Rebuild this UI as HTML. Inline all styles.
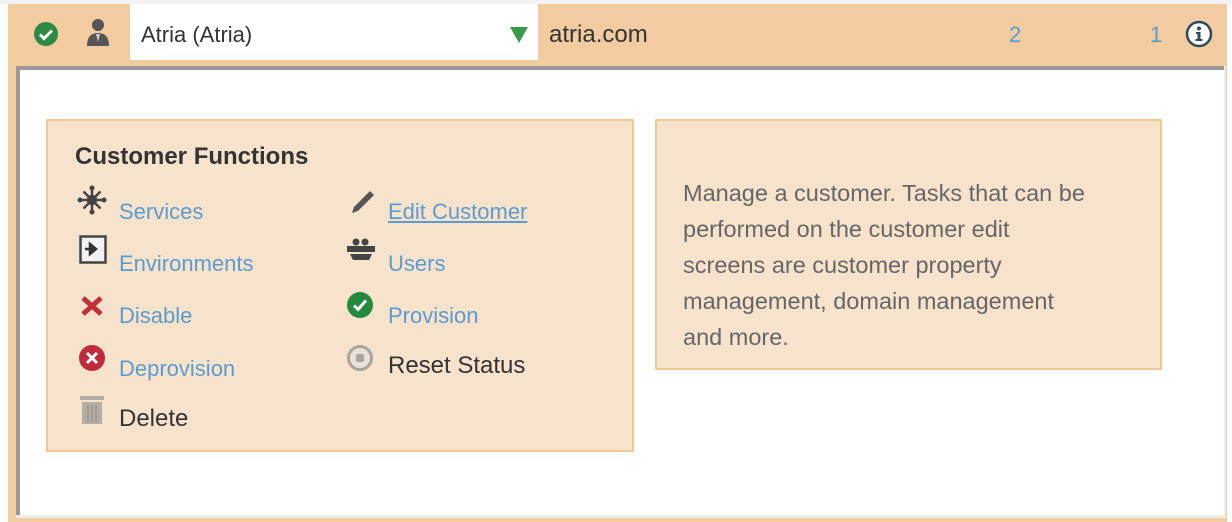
<!DOCTYPE html>
<html><head><meta charset="utf-8"><style>
*{margin:0;padding:0;box-sizing:border-box}
body{width:1232px;height:522px;position:relative;background:#fff;overflow:hidden;font-family:"Liberation Sans",sans-serif}
.a{position:absolute}
.lk{color:#5b9bd0;font-size:22px;white-space:nowrap}
.dk{color:#333;font-size:24px;white-space:nowrap}
</style></head><body>
<div class="a" style="left:0;top:0;width:1232px;height:4px;background:#f3f3f6"></div>
<div class="a" style="left:8px;top:4px;width:1219px;height:518px;background:#f2cca0"></div>
<div class="a" style="left:16px;top:66px;width:1210px;height:452px;background:#ececec"></div>
<div class="a" style="left:16px;top:66px;width:1208px;height:449px;background:#fff;border-top:4px solid #9a9a9a;border-left:4px solid #9a9a9a"></div>
<!-- header -->
<svg class="a" style="left:33px;top:21px" width="26" height="26" viewBox="0 0 26 26"><circle cx="13" cy="13" r="12" fill="#2e8a43"/><path d="M7 13.5l4 4 8-8" stroke="#fff" stroke-width="3" fill="none"/></svg>
<svg class="a" style="left:85px;top:16px" width="26" height="32" viewBox="0 0 26 32"><circle cx="13" cy="9" r="6" fill="#555"/><path d="M2 30 Q2 17 13 17 Q24 17 24 30Z" fill="#555"/><path d="M11 18l2 8 2-8z" fill="#ccc"/></svg>
<div class="a" style="left:130px;top:4px;width:408px;height:56px;background:#fff"></div>
<div class="a dk" style="left:141px;top:22px;font-size:22px">Atria (Atria)</div>
<svg class="a" style="left:510px;top:27px" width="18" height="16"><path d="M0 0h18L9 16z" fill="#3a9a4a"/></svg>
<div class="a dk" style="left:549px;top:21px;font-size:24px">atria.com</div>
<div class="a" style="left:1009px;top:22px;color:#5b9bd0;font-size:22px">2</div>
<div class="a" style="left:1150px;top:22px;color:#5b9bd0;font-size:22px">1</div>
<svg class="a" style="left:1185px;top:20px" width="28" height="28" viewBox="0 0 28 28"><circle cx="14" cy="14" r="12" fill="#fff" stroke="#2e4a5e" stroke-width="2.5"/><circle cx="14" cy="8.5" r="2" fill="#2e4a5e"/><path d="M11 12h4.5v7h2v2h-7v-2h2v-5h-1.5z" fill="#2e4a5e"/></svg>
<!-- box1 -->
<div class="a" style="left:46px;top:119px;width:588px;height:333px;background:#f7e3cc;border:2px solid #f0c896"></div>
<div class="a" style="left:75px;top:143px;font-size:24px;font-weight:bold;color:#333">Customer Functions</div>
<svg class="a" style="left:77px;top:185px" width="30" height="30" viewBox="0 0 30 30" stroke="#444" stroke-width="2.5"><path d="M15 3v24M3 15h24M6.5 6.5l17 17M23.5 6.5l-17 17"/><circle cx="15" cy="15" r="4" fill="#444"/><g fill="#444" stroke="none"><circle cx="15" cy="3" r="2.5"/><circle cx="15" cy="27" r="2.5"/><circle cx="3" cy="15" r="2.5"/><circle cx="27" cy="15" r="2.5"/></g></svg>
<div class="a lk" style="left:119px;top:199px">Services</div>
<svg class="a" style="left:79px;top:235px" width="28" height="30"><rect x="1.5" y="1.5" width="25" height="26" fill="#f2f2f2" stroke="#444" stroke-width="2.5"/><path d="M6 14h9M11 9l6 5-6 5z" stroke="#333" stroke-width="2.5" fill="#333"/></svg>
<div class="a lk" style="left:119px;top:251px">Environments</div>
<svg class="a" style="left:80px;top:295px" width="24" height="22"><path d="M3 3l18 16M21 3L3 19" stroke="#c0313a" stroke-width="5"/></svg>
<div class="a lk" style="left:119px;top:303px">Disable</div>
<svg class="a" style="left:78px;top:344px" width="30" height="30" viewBox="0 0 30 30"><circle cx="14" cy="14" r="13" fill="#c12a3c"/><path d="M9 9l10 10M19 9L9 19" stroke="#fff" stroke-width="3"/></svg>
<div class="a lk" style="left:119px;top:356px">Deprovision</div>
<svg class="a" style="left:80px;top:396px" width="26" height="30"><rect x="0" y="0" width="24" height="4" fill="#b4aea6"/><rect x="2" y="6" width="20" height="22" fill="#b4aea6"/><path d="M8 9v17M12 9v17M16 9v17" stroke="#9a948c" stroke-width="1.5"/></svg>
<div class="a dk" style="left:119px;top:405px">Delete</div>
<svg class="a" style="left:348px;top:187px" width="28" height="30"><path d="M4 26l2-6L22 4l4 4L10 24z" fill="#555"/></svg>
<div class="a lk" style="left:388px;top:199px;text-decoration:underline">Edit Customer</div>
<svg class="a" style="left:346px;top:236px" width="30" height="30"><circle cx="10" cy="6" r="3.5" fill="#444"/><circle cx="19" cy="6" r="3.5" fill="#444"/><rect x="1" y="10" width="28" height="6" fill="#444"/><path d="M4 18h22l-3 6H7z" fill="#444"/></svg>
<div class="a lk" style="left:388px;top:251px">Users</div>
<svg class="a" style="left:346px;top:291px" width="30" height="30"><circle cx="14" cy="14" r="13" fill="#268a3e"/><path d="M8 14.5l4 4 8-9" stroke="#fff" stroke-width="3" fill="none"/></svg>
<div class="a lk" style="left:388px;top:303px">Provision</div>
<svg class="a" style="left:346px;top:344px" width="30" height="30"><circle cx="14" cy="14" r="11.5" fill="#e8e2da" stroke="#aaa49c" stroke-width="3"/><rect x="10" y="10" width="8" height="8" rx="1.5" fill="#aaa49c"/></svg>
<div class="a dk" style="left:388px;top:352px">Reset Status</div>
<!-- box2 -->
<div class="a" style="left:655px;top:119px;width:507px;height:251px;background:#f7e3cc;border:2px solid #f0c896"></div>
<div class="a" style="left:683px;top:175px;font-size:23.5px;line-height:36px;color:#666;white-space:nowrap">Manage a customer. Tasks that can be<br>performed on the customer edit<br>screens are customer property<br>management, domain management<br>and more.</div>
</body></html>
